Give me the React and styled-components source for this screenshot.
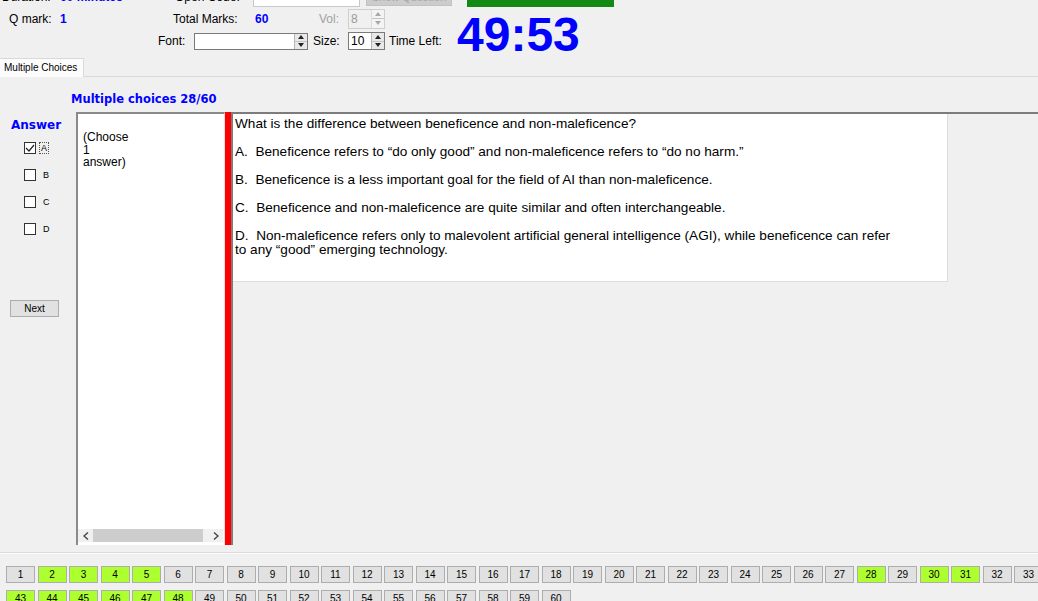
import React from 'react'
import styled, { createGlobalStyle } from 'styled-components'

const GlobalStyle = createGlobalStyle`
  html, body {
    margin: 0;
    padding: 0;
    background: #f0f0f0;
    overflow: hidden;
  }
  body {
    font-family: "Liberation Sans", Arial, sans-serif;
    color: #000;
  }
`

const answered = [2, 3, 4, 5, 28, 30, 31, 43, 44, 45, 46, 47, 48]

const Page = styled.div`
  width: 1038px;
  height: 601px;
  overflow: hidden;
  display: flex;
  flex-direction: column;
`

const Header = styled.div`
  display: flex;
  flex-direction: column;
  margin-top: -13px;
`

const HeadRow = styled.div`
  display: flex;
  align-items: center;
  height: ${p => p.$h}px;
  padding-left: ${p => p.$pl || 0}px;
  font-size: 12px;
`

const Slot = styled.div`
  width: ${p => p.$w}px;
  padding-left: ${p => p.$pad || 0}px;
  flex: none;
  display: flex;
  align-items: center;
  color: ${p => (p.$muted ? '#a0a0a0' : '#000')};
  white-space: nowrap;
`

const Value = styled.span`
  color: #0000ff;
  font-weight: bold;
`

const TextBox = styled.div`
  width: ${p => p.$w}px;
  height: ${p => p.$h}px;
  box-sizing: border-box;
  background: #fff;
  border: 1px solid #c8c8c8;
  flex: none;
`

const GreyButton = styled.div`
  width: 86px;
  height: 19px;
  margin-left: 6px;
  margin-top: -1px;
  box-sizing: border-box;
  background: #cccccc;
  border: 1px solid #c2c2c2;
  color: #a8a8a8;
  font-size: 11px;
  display: flex;
  align-items: center;
  justify-content: center;
  flex: none;
`

const GreenBar = styled.div`
  width: 147px;
  height: 20px;
  margin-left: 15px;
  background: #138a13;
  flex: none;
`

const SpinBox = styled.div`
  display: flex;
  width: ${p => p.$w}px;
  height: ${p => p.$h}px;
  box-sizing: border-box;
  border: 1px solid ${p => (p.$disabled ? '#cfcfcf' : '#7a7a7a')};
  background: ${p => (p.$disabled ? '#f0f0f0' : '#fff')};
  flex: none;
`

const SpinValue = styled.div`
  flex: 1;
  padding-left: 2px;
  font-size: 12px;
  line-height: ${p => p.$h - 2}px;
  color: ${p => (p.$disabled ? '#9a9a9a' : '#000')};
`

const SpinArrows = styled.div`
  width: 12px;
  display: flex;
  flex-direction: column;
  border-left: 1px solid ${p => (p.$disabled ? '#dcdcdc' : '#b5b5b5')};
  background: ${p => (p.$disabled ? '#f4f4f4' : '#e8e8e8')};
`

const SpinHalf = styled.div`
  flex: 1;
  display: flex;
  align-items: center;
  justify-content: center;
  & + & {
    border-top: 1px solid ${p => (p.$disabled ? '#e0e0e0' : '#c4c4c4')};
  }
`

const Spinner = ({ value, w, h, disabled }) => {
  const fill = disabled ? '#a8a8a8' : '#222'
  return (
    <SpinBox $w={w} $h={h} $disabled={disabled}>
      <SpinValue $h={h} $disabled={disabled}>{value}</SpinValue>
      <SpinArrows $disabled={disabled}>
        <SpinHalf $disabled={disabled}>
          <svg width="6" height="4" viewBox="0 0 6 4"><path d="M0 4 L3 0 L6 4 Z" fill={fill} /></svg>
        </SpinHalf>
        <SpinHalf $disabled={disabled}>
          <svg width="6" height="4" viewBox="0 0 6 4"><path d="M0 0 L3 4 L6 0 Z" fill={fill} /></svg>
        </SpinHalf>
      </SpinArrows>
    </SpinBox>
  )
}

const Timer = styled.div`
  font-size: 48px;
  line-height: 48px;
  font-weight: bold;
  color: #0000ff;
  margin-top: -12px;
  flex: none;
`

const TabStrip = styled.div`
  display: flex;
  margin-top: 6px;
  height: 18px;
  border-bottom: 1px solid #d9d9d9;
`

const Tab = styled.div`
  width: 84px;
  box-sizing: border-box;
  background: #fcfcfc;
  border: 1px solid #d9d9d9;
  border-bottom: none;
  border-left: none;
  font-size: 10px;
  padding-left: 4px;
  line-height: 17px;
  margin-bottom: -1px;
`

const Panel = styled.div`
  display: flex;
  flex-direction: column;
  padding-top: 15px;
  height: 476px;
  box-sizing: border-box;
  border-bottom: 1px solid #dcdcdc;
`

const Title = styled.div`
  margin-left: 71px;
  font-family: "DejaVu Sans", Verdana, sans-serif;
  font-weight: bold;
  font-size: 11.5px;
  line-height: 14px;
  color: #0000ff;
  margin-bottom: 6px;
`

const Body = styled.div`
  display: grid;
  grid-template-columns: 76px 149px 6px 1fr;
  height: 433px;
`

const AnswerCol = styled.div`
  display: flex;
  flex-direction: column;
`

const AnswerHead = styled.div`
  margin: 6px 0 2px 11px;
  font-family: "DejaVu Sans", Verdana, sans-serif;
  font-weight: bold;
  font-size: 12px;
  line-height: 14px;
  color: #0000ff;
`

const ChoiceRow = styled.div`
  display: flex;
  align-items: center;
  height: 27px;
  padding-left: 24px;
`

const CheckBox = styled.div`
  width: 12px;
  height: 12px;
  box-sizing: border-box;
  border: 1px solid #333;
  background: #fff;
  display: flex;
  align-items: center;
  justify-content: center;
`

const ChoiceLabel = styled.span`
  margin-left: ${p => (p.$focus ? 3 : 5)}px;
  font-size: 9px;
  line-height: 10px;
  padding: 0 1px;
  border: 1px dotted ${p => (p.$focus ? '#555' : 'transparent')};
`

const NextButton = styled.div`
  margin: 58px 0 0 10px;
  width: 49px;
  height: 17px;
  box-sizing: border-box;
  background: #e1e1e1;
  border: 1px solid #adadad;
  font-size: 10px;
  display: flex;
  align-items: center;
  justify-content: center;
`

const ChooseBox = styled.div`
  display: flex;
  flex-direction: column;
  background: #fff;
  border-left: 2px solid #8a8a8a;
  border-top: 2px solid #8a8a8a;
  border-right: 1px solid #e3e3e3;
  box-sizing: border-box;
`

const ChooseText = styled.div`
  padding: 17px 0 0 5px;
  font-size: 12px;
  line-height: 12.5px;
  flex: 1;
`

const HScroll = styled.div`
  display: flex;
  align-items: center;
  height: 13px;
  margin: 0 1px 3px 0;
  background: #f0f0f0;
`

const ScrollArrow = styled.div`
  width: 15px;
  display: flex;
  align-items: center;
  justify-content: center;
`

const ScrollThumb = styled.div`
  flex: 1;
  height: 13px;
  background: #cdcdcd;
  margin-right: 5px;
`

const RedBar = styled.div`
  background: #ff0000;
`

const QuestionArea = styled.div`
  border-top: 2px solid #7c7c7c;
  border-left: 2px solid #7c7c7c;
`

const QuestionBox = styled.div`
  width: 715px;
  height: 168px;
  box-sizing: border-box;
  background: #fff;
  border-right: 1px solid #dedede;
  border-bottom: 1px solid #dedede;
  padding: 3px 0 0 2px;
  font-size: 13.6px;
  line-height: 14px;
`

const Para = styled.p`
  margin: 0 0 14px;
  white-space: pre-wrap;
`

const Nav = styled.div`
  border-top: 1px solid #fdfdfd;
  padding: 12px 0 0 6px;
  flex: 1;
  overflow: hidden;
`

const NavGrid = styled.div`
  display: grid;
  grid-template-columns: repeat(42, 29px);
  column-gap: 2.5px;
  row-gap: 7px;
`

const PageButton = styled.div`
  height: 17px;
  box-sizing: border-box;
  background: ${p => (p.$done ? '#adff2f' : '#e1e1e1')};
  border: 1px solid #adadad;
  font-size: 10px;
  display: flex;
  align-items: center;
  justify-content: center;
`

const Check = () => (
  <svg width="10" height="10" viewBox="0 0 10 10">
    <path d="M1 5 L4 8 L9 2" fill="none" stroke="#222" strokeWidth="1.2" />
  </svg>
)

const Chevron = ({ dir }) => (
  <svg width="6" height="8" viewBox="0 0 6 8">
    <path d={dir === 'left' ? 'M5 0.5 L1 4 L5 7.5' : 'M1 0.5 L5 4 L1 7.5'} fill="none" stroke="#444" strokeWidth="1.4" />
  </svg>
)

const App = () => {
  const pages = Array.from({ length: 60 }, (_, i) => i + 1)
  return (
    <Page>
      <GlobalStyle />
      <Header>
        <HeadRow $h={20} $pl={2}>
          <Slot $w={58}>Duration:</Slot>
          <Slot $w={115}><Value>60 minutes</Value></Slot>
          <Slot $w={78}>Open Code:</Slot>
          <TextBox $w={107} $h={20} />
          <GreyButton>Show Question</GreyButton>
          <GreenBar />
        </HeadRow>
        <HeadRow $h={23} $pl={9}>
          <Slot $w={51}>Q mark:</Slot>
          <Slot $w={113}><Value>1</Value></Slot>
          <Slot $w={82}>Total Marks:</Slot>
          <Slot $w={64}><Value>60</Value></Slot>
          <Slot $w={29} $muted>Vol:</Slot>
          <Spinner value="8" w={37} h={20} disabled />
        </HeadRow>
        <HeadRow $h={22} $pl={158}>
          <Slot $w={36}>Font:</Slot>
          <Spinner value="" w={114} h={17} />
          <Slot $w={35} $pad={5}>Size:</Slot>
          <Spinner value="10" w={37} h={18} />
          <Slot $w={68} $pad={4}>Time Left:</Slot>
          <Timer>49:53</Timer>
        </HeadRow>
      </Header>

      <TabStrip>
        <Tab>Multiple Choices</Tab>
      </TabStrip>

      <Panel>
        <Title>Multiple choices 28/60</Title>
        <Body>
          <AnswerCol>
            <AnswerHead>Answer</AnswerHead>
            {['A', 'B', 'C', 'D'].map(letter => (
              <ChoiceRow key={letter}>
                <CheckBox>{letter === 'A' && <Check />}</CheckBox>
                <ChoiceLabel $focus={letter === 'A'}>{letter}</ChoiceLabel>
              </ChoiceRow>
            ))}
            <NextButton>Next</NextButton>
          </AnswerCol>

          <ChooseBox>
            <ChooseText>(Choose<br />1<br />answer)</ChooseText>
            <HScroll>
              <ScrollArrow><Chevron dir="left" /></ScrollArrow>
              <ScrollThumb />
              <ScrollArrow><Chevron dir="right" /></ScrollArrow>
            </HScroll>
          </ChooseBox>

          <RedBar />

          <QuestionArea>
            <QuestionBox>
              <Para>What is the difference between beneficence and non-maleficence?</Para>
              <Para>A.  Beneficence refers to “do only good” and non-maleficence refers to “do no harm.”</Para>
              <Para>B.  Beneficence is a less important goal for the field of AI than non-maleficence.</Para>
              <Para>C.  Beneficence and non-maleficence are quite similar and often interchangeable.</Para>
              <Para>{'D.  Non-maleficence refers only to malevolent artificial general intelligence (AGI), while beneficence can refer\nto any “good” emerging technology.'}</Para>
            </QuestionBox>
          </QuestionArea>
        </Body>
      </Panel>

      <Nav>
        <NavGrid>
          {pages.map(n => (
            <PageButton key={n} $done={answered.includes(n)}>{n}</PageButton>
          ))}
        </NavGrid>
      </Nav>
    </Page>
  )
}

export default App
